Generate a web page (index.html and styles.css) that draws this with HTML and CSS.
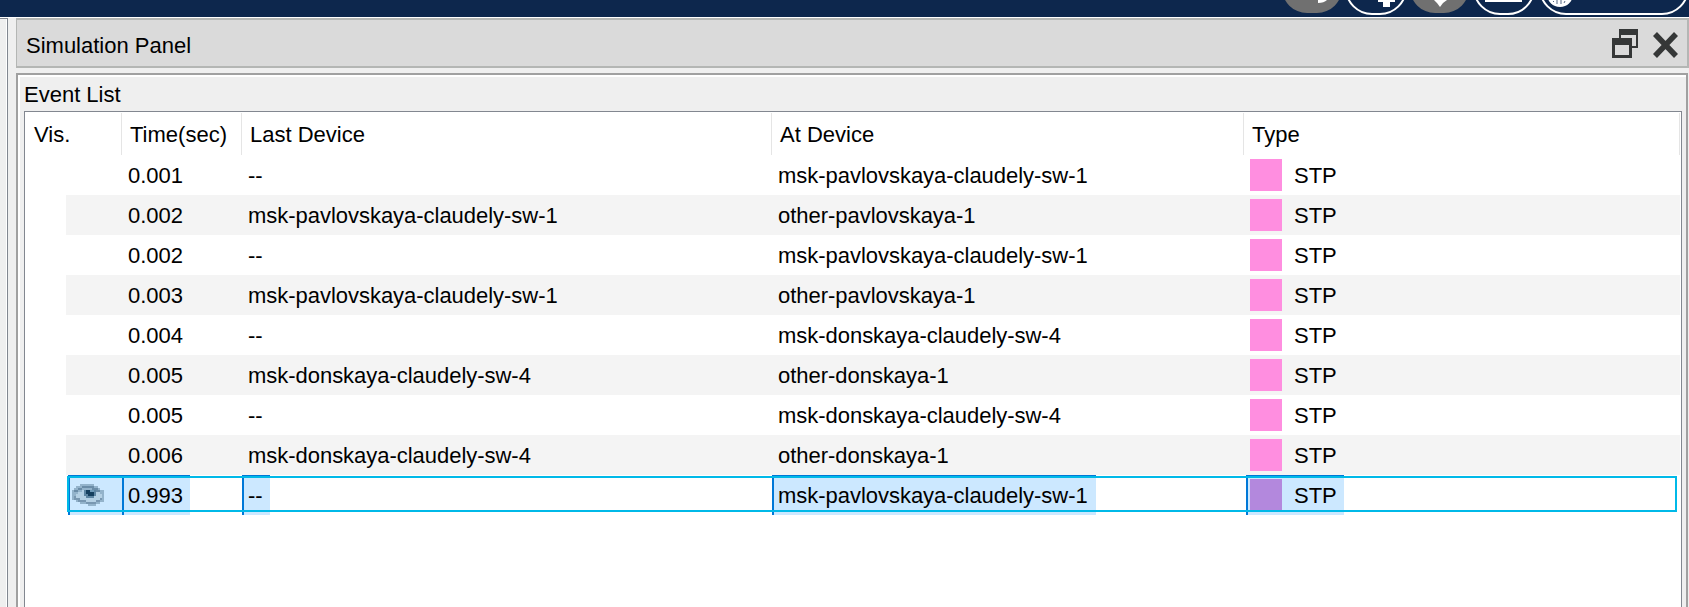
FILE: index.html
```html
<!DOCTYPE html>
<html lang="en"><head><meta charset="utf-8"><title>Simulation Panel</title><link rel="stylesheet" href="styles.css"></head>
<body>
<div class="toolbar">
<svg width="420" height="17" viewBox="0 0 420 17">
<rect x="13" y="-43" width="60" height="56" rx="25" fill="#707070"/>
<path d="M49 0h9q-3 3-9 3z" fill="#fff"/>
<rect x="77" y="-43" width="60" height="57" rx="26" fill="none" stroke="#fff" stroke-width="2"/>
<path d="M109 0h17v2h-5v5h-7v-5h-5z" fill="#fff"/>
<rect x="141" y="-43" width="59" height="56" rx="25" fill="#707070"/>
<path d="M165 0h13l-4 3-3 4-3-4z" fill="#fff"/>
<rect x="205" y="-43" width="60" height="57" rx="26" fill="none" stroke="#fff" stroke-width="2"/>
<path d="M216 0h37v2h-37z" fill="#fff"/>
<rect x="271" y="-43" width="148" height="57" rx="26" fill="none" stroke="#fff" stroke-width="2"/>
<circle cx="291" cy="-6" r="13" fill="#fff"/>
<path d="M284 1l1 1M288 0v4M292 0v4M296 1l-1 2" stroke="#0d274d" stroke-width=".7"/>
</svg>
</div>
<main class="workspace">
<div class="side"></div>
<section class="dock">
<header class="titlebar"><h1>Simulation Panel</h1>
<svg class="tools" width="67" height="30" viewBox="0 0 67 30">
<path d="M7 1h19v19h-6v-2h4V7H9v3H7z" fill="#353737"/>
<path d="M0 10h20v20H0zM3 17v10h14V17z" fill="#353737" fill-rule="evenodd"/>
<path d="M43 6l21 22M64 6L43 28" stroke="#353737" stroke-width="5.5"/>
</svg></header>
<div class="frame"><h2>Event List</h2>
<div class="list">
<div class="head"><span>Vis.</span><span>Time(sec)</span><span>Last Device</span><span>At Device</span><span>Type</span></div>
<div class="row"><span></span><span>0.001</span><span>--</span><span>msk-pavlovskaya-claudely-sw-1</span><span><i></i>STP</span></div>
<div class="row"><span></span><span>0.002</span><span>msk-pavlovskaya-claudely-sw-1</span><span>other-pavlovskaya-1</span><span><i></i>STP</span></div>
<div class="row"><span></span><span>0.002</span><span>--</span><span>msk-pavlovskaya-claudely-sw-1</span><span><i></i>STP</span></div>
<div class="row"><span></span><span>0.003</span><span>msk-pavlovskaya-claudely-sw-1</span><span>other-pavlovskaya-1</span><span><i></i>STP</span></div>
<div class="row"><span></span><span>0.004</span><span>--</span><span>msk-donskaya-claudely-sw-4</span><span><i></i>STP</span></div>
<div class="row"><span></span><span>0.005</span><span>msk-donskaya-claudely-sw-4</span><span>other-donskaya-1</span><span><i></i>STP</span></div>
<div class="row"><span></span><span>0.005</span><span>--</span><span>msk-donskaya-claudely-sw-4</span><span><i></i>STP</span></div>
<div class="row"><span></span><span>0.006</span><span>msk-donskaya-claudely-sw-4</span><span>other-donskaya-1</span><span><i></i>STP</span></div>
<div class="row selected"><span><b class="vis"><svg width="32" height="22" viewBox="0 0 32 22" shape-rendering="crispEdges"><path d="M2 4h2V2h4V0h14v2h4v2h2v2h4v12h-4v2h-4v2H16v-2H8v-2H4v-2H0V6h2z" fill="#93b3cb"/><path d="M2 6h4V4h4V2h12v2h4v2h2v2h-4V6h-4V4H10v2H6v2H2z" fill="#6a8ca7"/><path d="M4 10h2V8h4V6h14v2h4v2h2v4h-2v2h-4v2H12v-2H6v-2H4z" fill="#b4d0e4"/><path d="M12 6h12v6h-2v2h-8v-2h-2z" fill="#5d85a2"/><path d="M14 6h6v2h2v4h-6v-2h-2z" fill="#153f5e"/><path d="M18 6h4v2h-4z" fill="#6f9bb9"/><path d="M2 12h2v2h4v2h6v2h10v-2h4v-2h2v2h-2v2h-4v2H14v-2H6v-2H2z" fill="#7897b1"/></svg></b></span><span><b>0.993</b></span><span><b>--</b></span><span><b>msk-pavlovskaya-claudely-sw-1</b></span><span><b><i></i>STP</b></span></div>
</div></div>
</section></main>
</body></html>
```
FILE: styles.css
```css
*, *::after { box-sizing: border-box; }
body { margin: 0; height: 607px; overflow: hidden; background: #efefef; color: #000; font: 22px/26px "Liberation Sans", Arial, sans-serif; display: flex; flex-direction: column; }
h1, h2 { margin: 0; font-size: 22px; font-weight: 400; }
.toolbar { height: 17px; flex: none; background: #0d274d; display: flex; justify-content: flex-end; }
.workspace { flex: 1; display: flex; border-top: 1px solid #fff; min-height: 0; }
.side { width: 8px; border-right: 1px solid #828790; border-top: 1px solid #828790; box-shadow: inset -1px 0 #fff; margin-right: 8px; }
.dock { flex: 1; display: flex; flex-direction: column; }
.titlebar { flex: none; height: 50px; border: 2px solid #b4b6b4; border-left-width: 1px; background: #dadada; display: flex; align-items: center; justify-content: space-between; padding: 5px 10px 0 9px; margin-bottom: 5px; }
.tools { margin: -5px -2px 0 0; }
.frame { flex: 1; min-height: 0; border: 2px solid #a0a0a0; border-bottom: 0; margin-right: 1px; padding: 5px 4px 0 6px; box-shadow: inset 2px 2px #fff; }
.frame h2 { height: 31px; line-height: 29px; }
.list { height: 520px; border: 1px solid #828790; background: #fff; }
.head, .row { display: grid; grid-template-columns: 97px 120px 530px 472px 1fr; }
.head { height: 43px; padding: 1px 1px 0 0; line-height: 44px; }
.head span { padding-left: 8px; border-right: 1px solid #e5e5e5; height: 42px; }
.head span:first-child { padding-left: 9px; }
.row { height: 40px; margin: 0 1px 0 41px; grid-template-columns: 56px 120px 530px 472px 1fr; grid-template-rows: 40px; line-height: 42px; white-space: nowrap; position: relative; letter-spacing: -0.03px; }
.row:nth-child(odd):not(.selected) { background: #f4f4f4; }
.row > span { padding-left: 6px; display: flex; }
.row i { width: 32px; height: 32px; margin: 4px 12px 0 1px; background: #ff8ee0; }
.row > span:last-child { padding-left: 5px; }
.row > span:first-child { padding: 0 0 0 2px; }
.selected > span:nth-child(n+2) { padding-left: 0; }
.selected b { font-weight: 400; display: flex; background: #cce8ff; border-left: 2px solid #0078d7; border-top: 1px solid #0078d7; padding: 0 8px 0 4px; line-height: 40px; }
.selected > span:last-child { padding-left: 2px; }
.selected b i { background: #b388dd; margin: 3px 12px 0 2px; }
.selected > span:last-child b { padding: 0 7px 0 0; }
.selected > span:nth-child(2) b, .selected > span:nth-child(3) b { padding-right: 7px; }
.selected .vis { flex: 1; padding: 8px 0 0 2px; }
.selected::after { content: ""; position: absolute; left: 1px; right: 3px; top: 1px; height: 36px; border: 2px solid #00b9e8; }
```
